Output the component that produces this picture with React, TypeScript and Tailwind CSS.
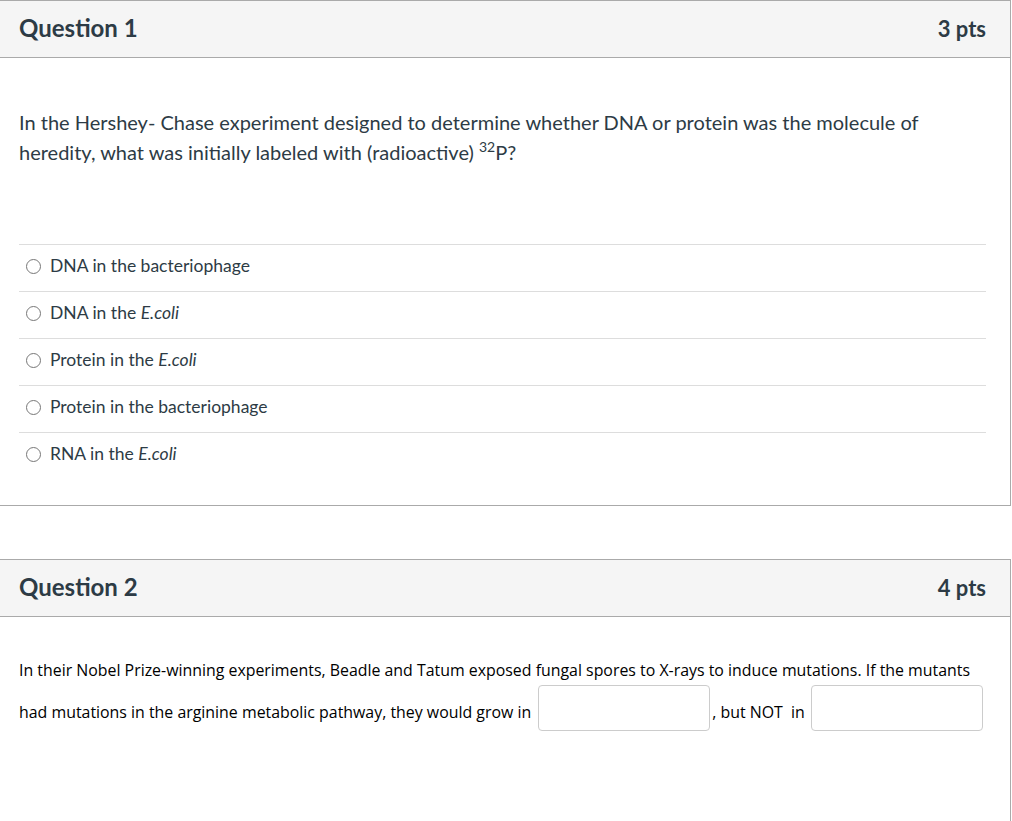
import { Fragment } from 'react'

type Option = { pre: string; em?: string }

const options: Option[] = [
  { pre: 'DNA in the bacteriophage' },
  { pre: 'DNA in the ', em: 'E.coli' },
  { pre: 'Protein in the ', em: 'E.coli' },
  { pre: 'Protein in the bacteriophage' },
  { pre: 'RNA in the ', em: 'E.coli' },
]

function Header({ title, pts }: { title: string; pts: string }) {
  return (
    <div className="h-[57px] bg-[#f5f5f5] border-b border-[#aaaaaa] flex items-center justify-between pl-[19px] pr-[24px] pb-[2px]">
      <h2 className="text-[24px] font-bold text-[#2d3b45]">{title}</h2>
      <span className="text-[22px] font-bold text-[#2d3b45]">{pts}</span>
    </div>
  )
}

export default function App() {
  return (
    <div className="w-[1011px] bg-white pb-10 font-['Lato',sans-serif] text-[#2d3b45]">
      <section className="border-t border-r border-b border-[#aaaaaa]">
        <Header title="Question 1" pts="3 pts" />
        <div className="px-[19px] pt-[49px] pb-[26px]">
          <p className="text-[20px] leading-[30px] pr-10">
            In the Hershey- Chase experiment designed to determine whether DNA or protein was the molecule of heredity,
            what was initially labeled with (radioactive) <sup className="text-[14px] top-[-0.55em]">32</sup>P?
          </p>
          <div className="mt-[77px] pr-[5px]">
            {options.map((o, i) => (
              <label
                key={i}
                className="h-[47px] flex items-center gap-[9px] border-t border-[#dddddd] pl-[7px] pb-[3px] text-[17.5px]"
              >
                <span className="w-[15px] h-[15px] rounded-full border border-[#777777] bg-white shrink-0" />
                <span>
                  {o.pre}
                  {o.em && <em>{o.em}</em>}
                </span>
              </label>
            ))}
          </div>
        </div>
      </section>

      <div className="h-[53px]" />

      <section className="border-t border-r border-[#aaaaaa] h-[262px]">
        <Header title="Question 2" pts="4 pts" />
        <div className="px-[19px] pt-[43px] text-[15.9px] text-black font-['Open_Sans',sans-serif]">
          <p className="leading-[20px]">
            In their Nobel Prize-winning experiments, Beadle and Tatum exposed fungal spores to X-rays to induce mutations. If the mutants
          </p>
          <div className="mt-[5px] flex items-center">
            {['had mutations in the arginine metabolic pathway, they would grow in', ', but NOT  in'].map((t, i) => (
              <Fragment key={i}>
                <span className={i === 1 ? 'ml-[2px] pt-[10px] whitespace-pre' : 'pt-[10px]'}>{t}</span>
                <input
                  type="text"
                  className={i === 1 ? 'ml-[6px] h-[46px] w-[172px] rounded border border-[#cccccc] bg-white' : 'ml-[7px] h-[46px] w-[172px] rounded border border-[#cccccc] bg-white'}
                />
              </Fragment>
            ))}
          </div>
        </div>
      </section>
    </div>
  )
}
